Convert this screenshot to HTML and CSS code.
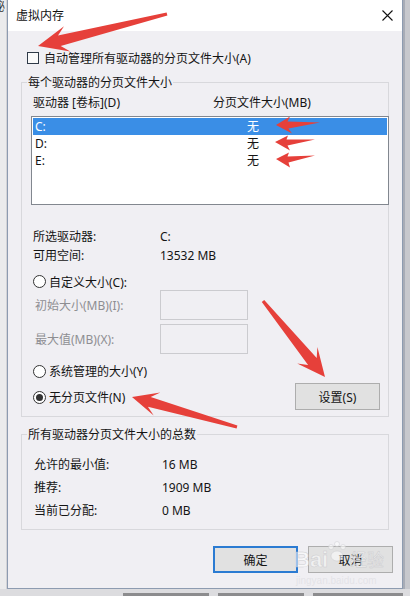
FILE: index.html
```html
<!DOCTYPE html>
<html lang="zh-CN">
<head>
    <meta charset="UTF-8">
    <meta name="viewport" content="width=device-width, initial-scale=1.0">
    <title>虚拟内存</title>
    <link rel="stylesheet" href="styles.css">
</head>
<body>
    <div class="desk">
        <div class="desk-row">
            <div class="side-left"><span>秘</span></div>

            <div class="window">
                <div class="titlebar">
                    <span class="title">虚拟内存</span>
                    <svg class="close" width="11" height="11" viewBox="0 0 11 11">
                        <path d="M0.5 0.5 L10.5 10.5 M10.5 0.5 L0.5 10.5" stroke="#111" stroke-width="1.1" fill="none"/>
                    </svg>
                </div>

                <div class="dialog">
                    <div class="check-row">
                        <span class="box"></span>
                        <span>自动管理所有驱动器的分页文件大小(A)</span>
                    </div>

                    <fieldset class="group">
                        <legend>每个驱动器的分页文件大小</legend>
                        <div class="group-body">
                            <div class="col-head">
                                <span>驱动器 [卷标](D)</span>
                                <span>分页文件大小(MB)</span>
                            </div>

                            <div class="listbox">
                                <div class="drive selected"><span>C:</span><span>无</span></div>
                                <div class="drive"><span>D:</span><span>无</span></div>
                                <div class="drive"><span>E:</span><span>无</span></div>
                            </div>

                            <div class="info">
                                <span>所选驱动器:</span><span>C:</span>
                                <span>可用空间:</span><span>13532 MB</span>
                            </div>

                            <div class="radio-row first">
                                <span class="radio"></span>
                                <span>自定义大小(C):</span>
                            </div>
                            <div class="field">
                                <span>初始大小(MB)(I):</span>
                                <span class="input"></span>
                            </div>
                            <div class="field second">
                                <span>最大值(MB)(X):</span>
                                <span class="input"></span>
                            </div>

                            <div class="choose">
                                <div class="radios">
                                    <div class="radio-row">
                                        <span class="radio"></span>
                                        <span>系统管理的大小(Y)</span>
                                    </div>
                                    <div class="radio-row">
                                        <span class="radio on"></span>
                                        <span>无分页文件(N)</span>
                                    </div>
                                </div>
                                <button class="btn">设置(S)</button>
                            </div>
                        </div>
                    </fieldset>

                    <fieldset class="group totals-group">
                        <legend>所有驱动器分页文件大小的总数</legend>
                        <div class="group-body totals">
                            <span>允许的最小值:</span><span>16 MB</span>
                            <span>推荐:</span><span>1909 MB</span>
                            <span>当前已分配:</span><span>0 MB</span>
                        </div>
                    </fieldset>

                    <div class="actions">
                        <button class="btn default">确定</button>
                        <button class="btn">取消</button>
                    </div>
                </div>
            </div>

            <div class="side-right"></div>
        </div>

        <div class="taskbar">
            <span class="bar"></span>
            <span class="bar"></span>
            <span class="bar wide"></span>
        </div>

        <!-- red annotation arrows + watermark on top of the screenshot -->
        <svg class="marks" width="410" height="596" viewBox="0 0 410 596">
            <g fill="#e6403a">
                <polygon points="38,46 70.3,51.4 60.7,46 167.4,15.5 166.6,12.5 58,35.4 64,26.2"/>
                <polygon points="276,125 290,116.5 287.5,121.5 320,122.5 288.5,128.5 292,133.5"/>
                <polygon points="275,142 288,135.5 286.5,139.5 315,139.5 287.5,145.5 290,150.5"/>
                <polygon points="276,159 289,152.5 287.5,156.5 315,155.5 288.5,162.5 290,167.5"/>
                <polygon points="325,377 317.4,347.1 316.7,358 264.2,300.1 261.8,302 308.1,365 297.2,363.5"/>
                <polygon points="132,397 160.3,392.6 150.7,397.1 237.4,425.6 236.6,428.4 147.9,406.7 153.7,415.6"/>
            </g>
            <g class="watermark">
                <text x="294" y="567" font-size="22" font-weight="bold">Bai</text>
                <circle cx="331" cy="547" r="2.5"/>
                <circle cx="337" cy="544" r="2.5"/>
                <circle cx="343" cy="547" r="2.5"/>
                <ellipse cx="337" cy="556" rx="6" ry="5"/>
                <text x="350" y="566" font-size="17">经验</text>
                <text class="url" x="296" y="584" font-size="10">jingyan.baidu.com</text>
            </g>
        </svg>
    </div>
</body>
</html>
```

FILE: styles.css
```css
* {
    margin: 0;
    padding: 0;
    box-sizing: border-box;
}

body {
    font-family: "Noto Sans", "Noto Sans CJK SC", sans-serif;
    font-size: 12px;
    color: #141414;
}

.desk {
    position: relative;
    width: 410px;
    height: 596px;
    background-color: #dcdcdf;
    overflow: hidden;
}

.desk-row {
    display: flex;
    height: 589px;
}

.side-left {
    width: 7px;
    background-color: #ebebec;
    border-right: 1px solid #d3d3d6;
    overflow: hidden;
}

.side-left span {
    display: block;
    margin-left: -7px;
    line-height: 14px;
    color: #333;
}

.side-right {
    flex: 1;
    background-color: #c7c8cd;
    border-left: 2px solid #a8acb6;
}

.window {
    width: 396px;
    display: flex;
    flex-direction: column;
    border: 1px solid #8d9bb0;
    border-top: none;
    background-color: #f0eff3;
}

.titlebar {
    height: 31px;
    background-color: #fff;
    display: flex;
    align-items: center;
    justify-content: space-between;
    padding: 0 9px 0 8px;
}

.title {
    line-height: 16px;
    color: #111;
}

.dialog {
    flex: 1;
    padding: 18px 13px 0;
}

.check-row {
    display: flex;
    align-items: center;
    gap: 5px;
    height: 18px;
    padding-left: 6px;
}

.box {
    width: 12px;
    height: 12px;
    border: 1px solid #2f3a48;
    background-color: #fafafa;
}

.group {
    border: 1px solid #d8d8dc;
    margin-top: 7px;
    min-width: 0;
}

.group legend {
    margin-left: 5px;
    padding: 0 1px;
    line-height: 17px;
}

.group-body {
    padding: 4px 0 6px 9px;
}

.col-head {
    display: grid;
    grid-template-columns: 180px 1fr;
    height: 16px;
    line-height: 16px;
    padding-left: 2px;
}

.listbox {
    margin-top: 5px;
    margin-right: -1px;
    height: 89px;
    border: 1px solid #82878f;
    background-color: #fff;
    padding: 1px;
}

.drive {
    display: grid;
    grid-template-columns: 212px 1fr;
    height: 17px;
    line-height: 17px;
    padding-left: 2px;
}

.drive.selected {
    background-color: #3a8ee6;
    color: #fff;
}

.info {
    display: grid;
    grid-template-columns: 127px 1fr;
    grid-auto-rows: 19px;
    line-height: 19px;
    margin-top: 22px;
    padding-left: 2px;
}

.radio-row {
    display: flex;
    align-items: center;
    gap: 3px;
    height: 18px;
    padding-left: 2px;
}

.radio-row.first {
    margin-top: 8px;
    height: 17px;
}

.radio {
    width: 13px;
    height: 13px;
    border: 1px solid #333;
    border-radius: 50%;
    background-color: #fff;
    display: flex;
    align-items: center;
    justify-content: center;
}

.radio.on::after {
    content: "";
    width: 7px;
    height: 7px;
    border-radius: 50%;
    background-color: #333;
}

.field {
    display: grid;
    grid-template-columns: 125px 88px;
    align-items: center;
    height: 30px;
    padding-left: 4px;
    color: #8e8e92;
}

.field.second {
    margin-top: 4px;
}

.input {
    height: 30px;
    border: 1px solid #cbcbcf;
}

.choose {
    display: flex;
    justify-content: space-between;
    align-items: flex-end;
    margin-top: 8px;
    padding-right: 8px;
}

.radios {
    display: flex;
    flex-direction: column;
    gap: 8px;
    padding-bottom: 4px;
}

.btn {
    width: 85px;
    height: 27px;
    border: 1px solid #adadad;
    background-color: #e1e1e1;
    font: inherit;
    color: #141414;
}

.btn.default {
    border: 2px solid #2b7bd2;
}

.totals-group {
    margin-top: 9px;
}

.totals {
    display: grid;
    grid-template-columns: 128px 1fr;
    grid-auto-rows: 23px;
    line-height: 23px;
    padding: 10px 0 7px 12px;
}

.actions {
    display: flex;
    justify-content: flex-end;
    gap: 10px;
    margin-top: 16px;
    margin-right: -4px;
}

.taskbar {
    height: 7px;
    display: flex;
    align-items: flex-end;
    gap: 9px;
    padding-left: 123px;
}

.bar {
    width: 86px;
    height: 3px;
    background-color: #8c8c8e;
}

.bar.wide {
    width: 90px;
}

.marks {
    position: absolute;
    top: 0;
    left: 0;
    pointer-events: none;
}

.watermark {
    fill: #fff;
    fill-opacity: 0.55;
    stroke: #c4c4c8;
    stroke-width: 0.5;
    stroke-opacity: 0.8;
    font-family: "Liberation Sans", "Noto Sans CJK SC", sans-serif;
}

.watermark .url {
    stroke: none;
    fill: #d9d9dd;
}
```
